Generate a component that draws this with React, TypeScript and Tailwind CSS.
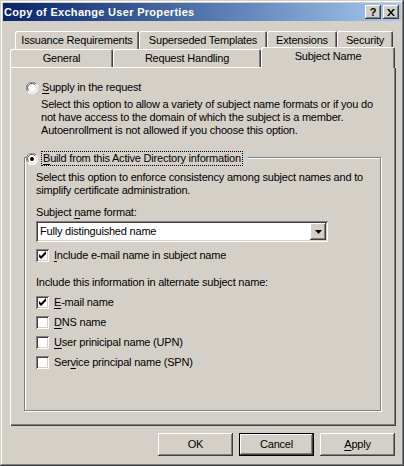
import React from 'react';

const raised = 'shadow-[inset_-1px_-1px_#404040,inset_1px_1px_#ffffff,inset_-2px_-2px_#808080]';
const sunken = 'shadow-[inset_1px_1px_#808080,inset_-1px_-1px_#ffffff,inset_2px_2px_#404040,inset_-2px_-2px_#d4d0c8]';

function Radio({ checked }: { checked?: boolean }) {
  return (
    <svg width="12" height="12" viewBox="0 0 12 12" className="shrink-0">
      <circle cx="6" cy="6" r="5.5" fill="#fff" />
      <path d="M10.5 2.2 A5.5 5.5 0 0 0 1.6 9.5" stroke="#808080" fill="none" strokeWidth="1" />
      <path d="M9.4 3 A4.3 4.3 0 0 0 2.6 8.6" stroke="#404040" fill="none" strokeWidth="1" />
      <path d="M1.6 9.6 A5.5 5.5 0 0 0 10.5 2.2" stroke="#ffffff" fill="none" strokeWidth="1" />
      <path d="M2.6 8.8 A4.3 4.3 0 0 0 9.4 3.2" stroke="#d4d0c8" fill="none" strokeWidth="1" />
      {checked && <circle cx="6" cy="6" r="2" fill="#000" />}
    </svg>
  );
}

function Check({ checked }: { checked?: boolean }) {
  return (
    <span className={`relative block h-[13px] w-[13px] shrink-0 bg-white ${sunken}`}>
      {checked && (
        <svg width="13" height="13" viewBox="0 0 13 13" className="absolute left-0 top-0">
          <path d="M3 5 L5 7 L10 2 L10 5 L5 10 L3 8 Z" fill="#000" />
        </svg>
      )}
    </span>
  );
}

function Key({ children }: { children: React.ReactNode }) {
  return <span className="underline underline-offset-[2px]">{children}</span>;
}

function CheckRow({ checked, children }: { checked?: boolean; children: React.ReactNode }) {
  return (
    <div className="flex h-[20px] items-center gap-[5px]">
      <Check checked={checked} />
      <span>{children}</span>
    </div>
  );
}

function Tab({ w, label }: { w: string; label: string }) {
  return (
    <div
      className={`${w} flex h-full items-center justify-center rounded-tl-[2px] rounded-tr-[2px] shadow-[inset_1px_1px_#ffffff,inset_-1px_0_#404040,inset_-2px_0_#808080]`}
    >
      {label}
    </div>
  );
}

function Button({ label, def }: { label: React.ReactNode; def?: boolean }) {
  return (
    <div
      className={`flex h-[23px] w-[75px] items-center justify-center ${
        def
          ? 'border border-black shadow-[inset_-1px_-1px_#404040,inset_1px_1px_#ffffff,inset_-2px_-2px_#808080]'
          : raised
      }`}
    >
      {label}
    </div>
  );
}

export default function App() {
  return (
    <div className="h-[466px] w-[404px] bg-[#d4d0c8] p-[3px] font-['Liberation_Sans',Arial,sans-serif] text-[11px] leading-[13px] tracking-[-0.2px] text-black shadow-[inset_-1px_-1px_#404040,inset_1px_1px_#d4d0c8,inset_-2px_-2px_#808080,inset_2px_2px_#ffffff]">
      {/* title bar */}
      <div className="flex h-[18px] items-center justify-between bg-gradient-to-r from-[#0a246a] to-[#a6caf0] pl-[1px] pr-[2px]">
        <span className="text-[11px] font-bold tracking-[0.3px] text-white">Copy of Exchange User Properties</span>
        <div className="flex items-center gap-[2px]">
          <div className={`flex h-[14px] w-[16px] items-center justify-center bg-[#d4d0c8] text-[11px] font-bold ${raised}`}>?</div>
          <div className={`flex h-[14px] w-[16px] items-center justify-center bg-[#d4d0c8] ${raised}`}>
            <svg width="8" height="7" viewBox="0 0 8 7">
              <path d="M0 0 L2 0 L4 2.5 L6 0 L8 0 L5 3.5 L8 7 L6 7 L4 4.5 L2 7 L0 7 L3 3.5 Z" fill="#000" />
            </svg>
          </div>
        </div>
      </div>

      {/* tab control */}
      <div className="ml-[7px] mt-[10px] w-[386px]">
        <div className="flex h-[18px] pl-[5px] pr-[3px]">
          <Tab w="w-[124px]" label="Issuance Requirements" />
          <Tab w="w-[128px]" label="Superseded Templates" />
          <Tab w="w-[70px]" label="Extensions" />
          <Tab w="w-[56px]" label="Security" />
        </div>
        <div className="flex h-[18px] items-end">
          <Tab w="w-[103px]" label="General" />
          <Tab w="w-[148px]" label="Request Handling" />
          <div className="relative z-10 -mb-[1px] flex h-[21px] w-[134px] items-start justify-center rounded-tl-[2px] rounded-tr-[2px] bg-[#d4d0c8] pt-[3px] shadow-[inset_1px_1px_#ffffff,inset_-1px_0_#404040,inset_-2px_0_#808080]">
            Subject Name
          </div>
        </div>

        {/* panel */}
        <div className="h-[359px] pl-[14px] pt-[14px] shadow-[inset_1px_1px_#ffffff,inset_-1px_-1px_#404040,inset_-2px_-2px_#808080]">
          <div className="ml-[2px] flex items-center gap-[4px]">
            <Radio />
            <span>
              <Key>S</Key>upply in the request
            </span>
          </div>
          <div className="ml-[17px] mt-[4px] whitespace-nowrap">
            Select this option to allow a variety of subject name formats or if you do
            <br />
            not have access to the domain of which the subject is a member.
            <br />
            Autoenrollment is not allowed if you choose this option.
          </div>

          {/* group box */}
          <div className="relative mt-[20px] h-[254px] w-[357px] border border-[#808080] shadow-[1px_1px_#ffffff,inset_1px_1px_#ffffff]">
            <div className="absolute -top-[7px] left-[1px] flex items-center gap-[3px] bg-[#d4d0c8] pr-[5px]">
              <Radio checked />
              <span className="border border-dotted border-black px-[1px]">
                <Key>B</Key>uild from this Active Directory information
              </span>
            </div>
            <div className="pl-[11px] pt-[13px]">
              <div className="whitespace-nowrap">
                Select this option to enforce consistency among subject names and to
                <br />
                simplify certificate administration.
              </div>
              <div className="mt-[9px]">
                Subject <Key>n</Key>ame format:
              </div>
              <div className={`mt-[2px] flex h-[21px] w-[292px] items-center bg-white p-[2px] ${sunken}`}>
                <span className="flex-1 pl-[2px]">Fully distinguished name</span>
                <div className={`flex h-[17px] w-[16px] items-center justify-center bg-[#d4d0c8] ${raised}`}>
                  <svg width="7" height="4" viewBox="0 0 7 4">
                    <path d="M0 0 L7 0 L3.5 4 Z" fill="#000" />
                  </svg>
                </div>
              </div>
              <div className="mt-[3px]">
                <CheckRow checked>
                  <Key>I</Key>nclude e-mail name in subject name
                </CheckRow>
              </div>
              <div className="mt-[11px]">Include this information in alternate subject name:</div>
              <div className="mt-[3px]">
                <CheckRow checked>
                  <Key>E</Key>-mail name
                </CheckRow>
                <CheckRow>
                  <Key>D</Key>NS name
                </CheckRow>
                <CheckRow>
                  <Key>U</Key>ser prinicipal name (UPN)
                </CheckRow>
                <CheckRow>
                  Ser<Key>v</Key>ice principal name (SPN)
                </CheckRow>
              </div>
            </div>
          </div>
        </div>
      </div>

      {/* buttons */}
      <div className="mt-[7px] flex justify-end gap-[6px] pr-[6px]">
        <Button label="OK" />
        <Button label="Cancel" def />
        <Button
          label={
            <span>
              <Key>A</Key>pply
            </span>
          }
        />
      </div>
    </div>
  );
}
